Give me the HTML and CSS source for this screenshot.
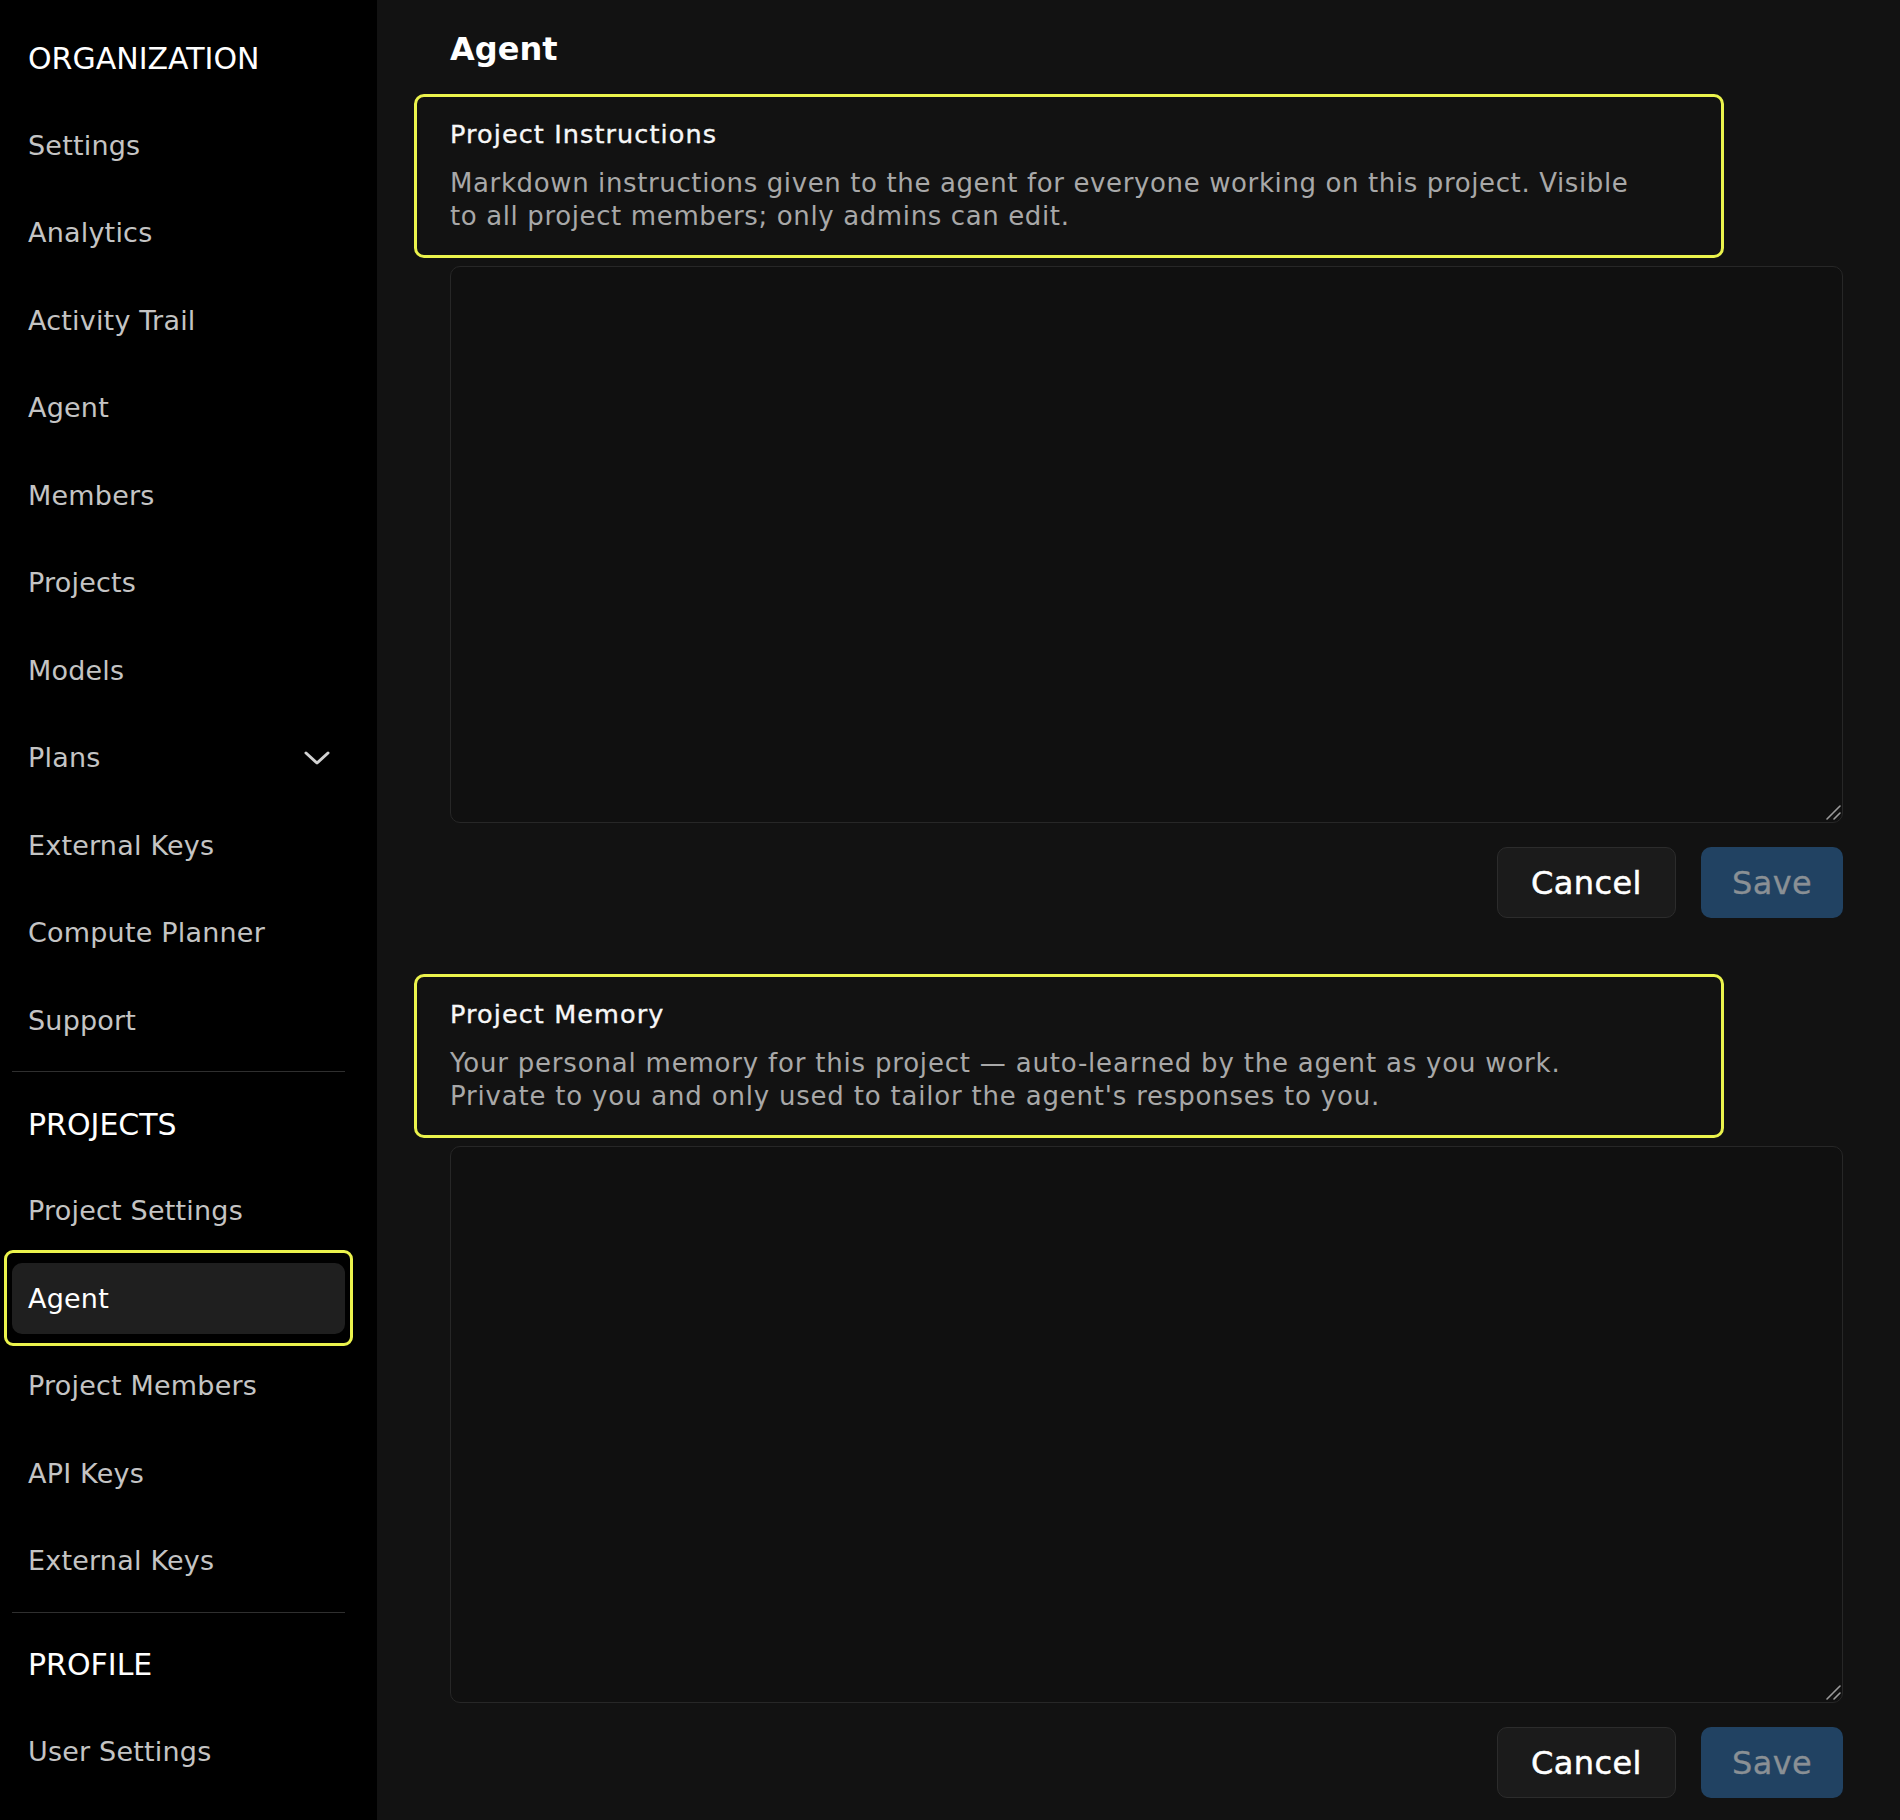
FILE: index.html
```html
<!DOCTYPE html>
<html lang="en">
<head>
<meta charset="utf-8">
<title>Agent</title>
<link rel="stylesheet" href="styles.css">
</head>
<body>
<div class="app">
  <aside class="sidebar">
    <nav class="nav">
      <div class="nav-head">ORGANIZATION</div>
      <a class="nav-item">Settings</a>
      <a class="nav-item">Analytics</a>
      <a class="nav-item">Activity Trail</a>
      <a class="nav-item">Agent</a>
      <a class="nav-item">Members</a>
      <a class="nav-item">Projects</a>
      <a class="nav-item">Models</a>
      <a class="nav-item nav-item--expand">
        <span>Plans</span>
        <svg class="chevron" width="26" height="14" viewBox="0 0 26 14" aria-hidden="true"><polyline points="2,2 13,12 24,2" fill="none" stroke="currentColor" stroke-width="3" stroke-linecap="round" stroke-linejoin="round"/></svg>
      </a>
      <a class="nav-item">External Keys</a>
      <a class="nav-item">Compute Planner</a>
      <a class="nav-item">Support</a>
      <hr class="nav-divider">
      <div class="nav-head">PROJECTS</div>
      <a class="nav-item">Project Settings</a>
      <a class="nav-item is-active">Agent</a>
      <a class="nav-item">Project Members</a>
      <a class="nav-item">API Keys</a>
      <a class="nav-item">External Keys</a>
      <hr class="nav-divider">
      <div class="nav-head">PROFILE</div>
      <a class="nav-item">User Settings</a>
    </nav>
  </aside>
  <main class="main">
    <h1 class="page-title">Agent</h1>

    <section class="block">
      <header class="block-head">
        <h2 class="block-title">Project Instructions</h2>
        <p class="block-desc">Markdown instructions given to the agent for everyone working on this project. Visible<br>to all project members; only admins can edit.</p>
      </header>
      <div class="input-wrap">
        <textarea class="block-input"></textarea>
        <svg class="grip" width="16" height="16" viewBox="0 0 16 16" aria-hidden="true"><path d="M2 15 L15 2 M9 15 L15 9" stroke="currentColor" stroke-width="1.6" stroke-linecap="round"/></svg>
      </div>
      <div class="block-actions">
        <button class="btn btn-cancel" type="button">Cancel</button>
        <button class="btn btn-save" type="button" disabled>Save</button>
      </div>
    </section>

    <section class="block">
      <header class="block-head">
        <h2 class="block-title">Project Memory</h2>
        <p class="block-desc block-desc--wide">Your personal memory for this project — auto-learned by the agent as you work.<br>Private to you and only used to tailor the agent's responses to you.</p>
      </header>
      <div class="input-wrap">
        <textarea class="block-input"></textarea>
        <svg class="grip" width="16" height="16" viewBox="0 0 16 16" aria-hidden="true"><path d="M2 15 L15 2 M9 15 L15 9" stroke="currentColor" stroke-width="1.6" stroke-linecap="round"/></svg>
      </div>
      <div class="block-actions">
        <button class="btn btn-cancel" type="button">Cancel</button>
        <button class="btn btn-save" type="button" disabled>Save</button>
      </div>
    </section>
  </main>
</div>
</body>
</html>
```

FILE: styles.css
```css
html, body {
  margin: 0;
  padding: 0;
  background: #121212;
}

body {
  font-family: "DejaVu Sans", "Noto Sans", sans-serif;
  color: #fff;
}

.app {
  display: flex;
  min-height: 1820px;
}

/* Sidebar */
.sidebar {
  flex: none;
  width: 377px;
  box-sizing: border-box;
  padding: 22px 32px 0 12px;
  background: #000;
}

.nav {
  display: flex;
  flex-direction: column;
  gap: 16.5px;
}

.nav-head,
.nav-item {
  height: 71px;
  box-sizing: border-box;
  display: flex;
  align-items: center;
  padding: 0 15px 0 16px;
}

.nav-head {
  font-size: 30px;
  color: #fff;
  padding-top: 2px;
}

.nav-item {
  position: relative;
  font-size: 27px;
  letter-spacing: 0.2px;
  color: #c4c4c4;
  text-decoration: none;
  border-radius: 10px;
}

.nav-item--expand {
  justify-content: space-between;
}

.chevron {
  color: #d2d2d2;
}

.nav-item.is-active {
  background: #1f1f1f;
  color: #fff;
}

.nav-item.is-active::after {
  content: "";
  position: absolute;
  top: -13px;
  bottom: -12px;
  left: -8px;
  right: -8px;
  border: 3px solid #ebf34c;
  border-radius: 9px;
  pointer-events: none;
}

.nav-divider {
  height: 1px;
  margin: -1px 0;
  border: 0;
  background: #2f2f2f;
}

/* Main */
.main {
  flex: 1;
  min-width: 0;
  box-sizing: border-box;
  padding: 29px 57px 0 73px;
}

.page-title {
  margin: 0;
  font-size: 32px;
  line-height: 40px;
  font-weight: 700;
  color: #fff;
}

.block-head {
  margin: 25px 0 0 -36px;
  width: 1310px;
  box-sizing: border-box;
  padding: 21px 0 22.5px 33px;
  border: 3px solid #ebf34c;
  border-radius: 10px;
}

.block + .block .block-head {
  margin-top: 56px;
}

.block-title {
  margin: 0;
  font-size: 25.5px;
  line-height: 32px;
  font-weight: 400;
  letter-spacing: 1.1px;
  color: #f7f7f7;
  -webkit-text-stroke: 0.35px #f7f7f7;
}

.block-desc {
  margin: 16.5px 0 0;
  font-size: 26px;
  line-height: 33px;
  letter-spacing: 0.62px;
  color: #a8a8a8;
}

.block-desc--wide {
  letter-spacing: 0.8px;
}

.input-wrap {
  position: relative;
  margin-top: 8px;
}

.block-input {
  display: block;
  width: 100%;
  height: 557px;
  margin: 0;
  box-sizing: border-box;
  padding: 16px 20px;
  background: #101010;
  border: 1px solid #272727;
  border-radius: 10px;
  color: #ddd;
  font-family: inherit;
  font-size: 24px;
  resize: none;
  outline: none;
}

.grip {
  position: absolute;
  right: 2px;
  bottom: 3px;
  color: #9a9a9a;
  pointer-events: none;
}

.block-actions {
  display: flex;
  justify-content: flex-end;
  gap: 25px;
  margin-top: 24px;
}

.btn {
  height: 71px;
  box-sizing: border-box;
  border-radius: 10px;
  font-family: inherit;
  font-size: 32px;
  letter-spacing: 0.4px;
  padding: 0;
  cursor: pointer;
}

.btn-cancel {
  width: 179px;
  background: #1b1b1b;
  border: 1px solid #2c2c2c;
  color: #fff;
  -webkit-text-stroke: 0.5px #fff;
}

.btn-save {
  width: 142px;
  background: #214262;
  border: 0;
  color: #8a9095;
  -webkit-text-stroke: 0.3px #8a9095;
}
```
